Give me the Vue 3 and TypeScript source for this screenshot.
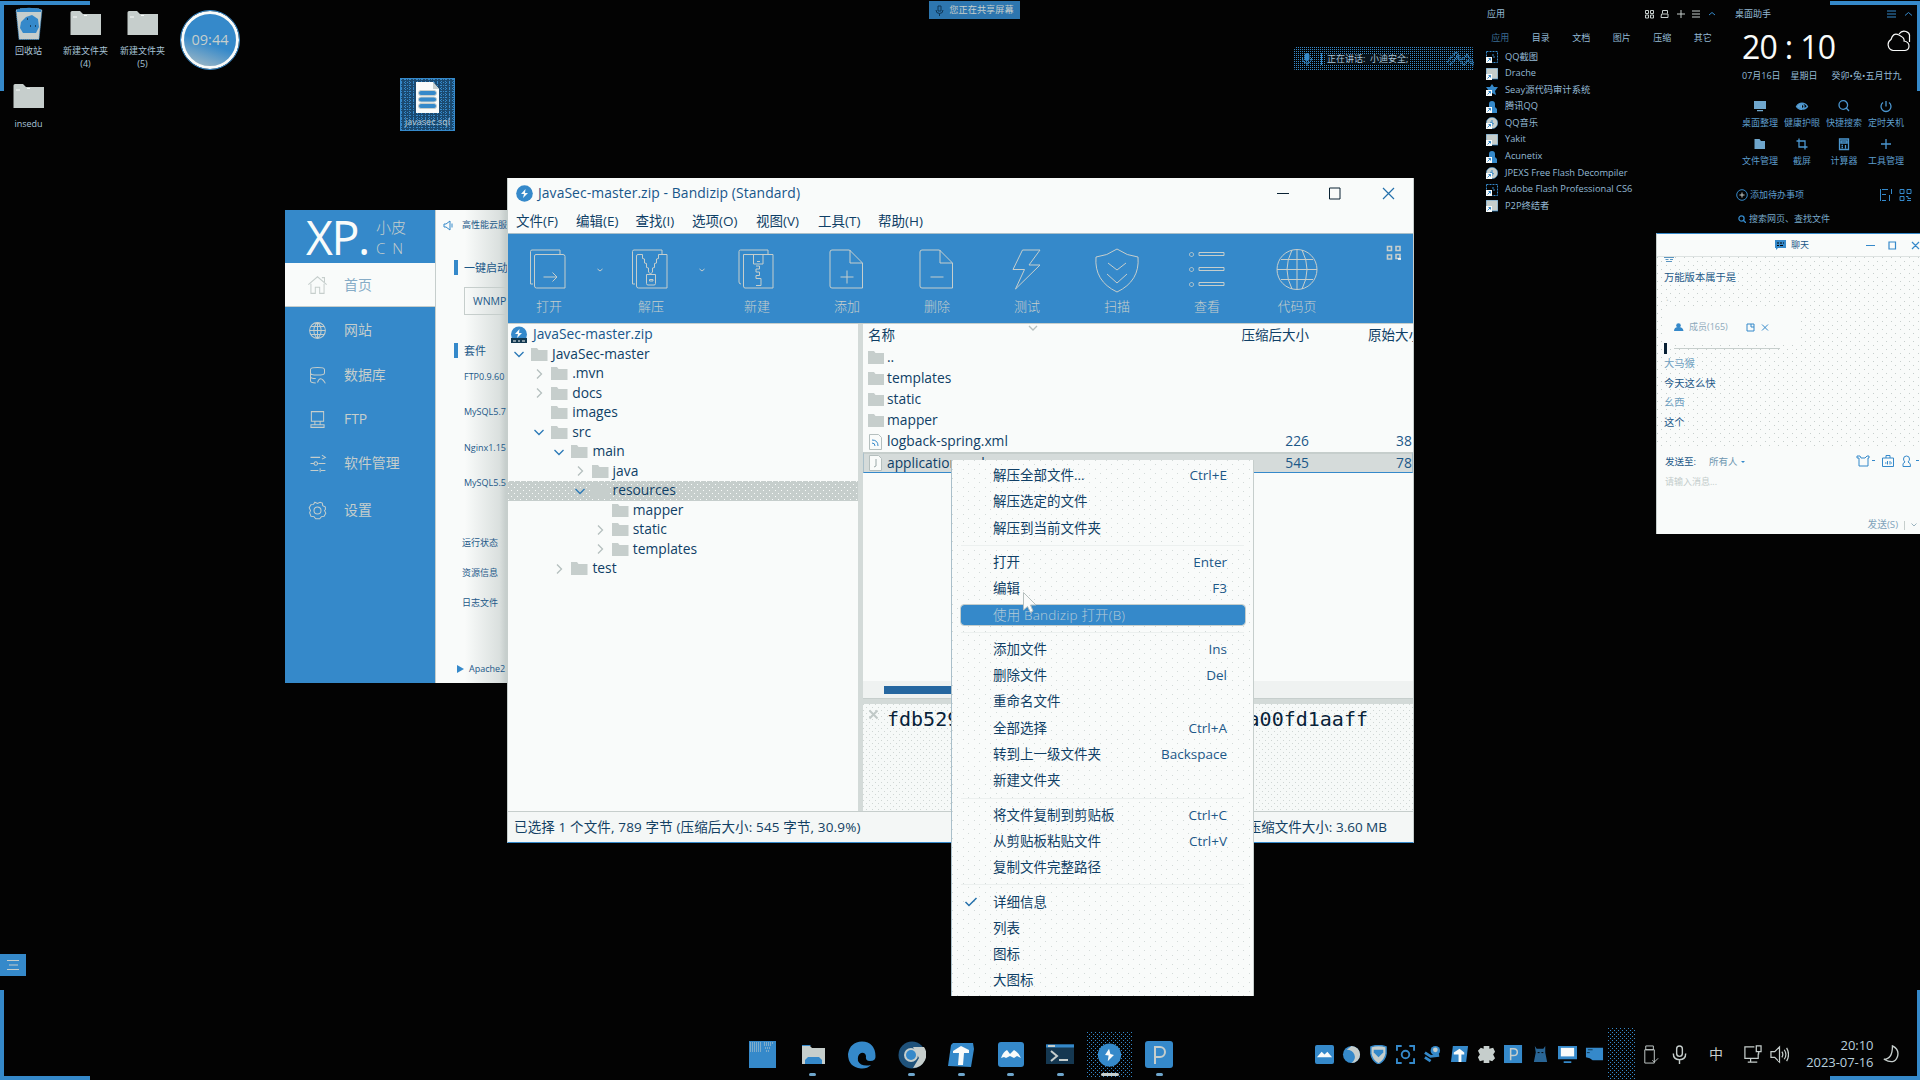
<script setup lang="ts">
interface Glyph { s?: string; f?: string; w?: string }

const desktopIcons = [
  { x: 0, y: 4, kind: 'bin', name: '回收站', sub: '' },
  { x: 57, y: 4, kind: 'folder', name: '新建文件夹', sub: '(4)' },
  { x: 114, y: 4, kind: 'folder', name: '新建文件夹', sub: '(5)' },
  { x: 0, y: 77, kind: 'folder', name: 'insedu', sub: '' },
]

const apps = [
  { name: 'QQ截图', look: 'frame' },
  { name: 'Drache', look: 'card' },
  { name: 'Seay源代码审计系统', look: 'star' },
  { name: '腾讯QQ', look: 'person' },
  { name: 'QQ音乐', look: 'disc' },
  { name: 'Yakit', look: 'card' },
  { name: 'Acunetix', look: 'person' },
  { name: 'JPEXS Free Flash Decompiler', look: 'disc' },
  { name: 'Adobe Flash Professional CS6', look: 'frame' },
  { name: 'P2P终结者', look: 'card' },
]
const appTabs = ['应用', '目录', '文档', '图片', '压缩', '其它']

const tools: { name: string; icon: Glyph }[] = [
  { name: '桌面整理', icon: { f: 'M2 3h12v8H2zM5 12h6v1.200H5z' } },
  { name: '健康护眼', icon: { s: 'M2.500 8.500C5 4 11 4 13.500 8.500C11 12 5 12 2.500 8.500zM6 8.500a2 2 0 1 0 4 0a2 2 0 1 0-4 0z', f: 'M2.500 8.500C4 5.500 7 5 8 5v7C6 12 4 11 2.500 8.500z' } },
  { name: '快捷搜索', icon: { s: 'M3 7a4.300 4.300 0 1 0 8.600 0a4.300 4.300 0 1 0-8.600 0zM10.500 10.300L13 13' } },
  { name: '定时关机', icon: { s: 'M8 3v5.500M5 4.500a5 5 0 1 0 6 0' } },
  { name: '文件管理', icon: { f: 'M2.500 3h5l1.500 2h4v8H2.500z' } },
  { name: '截屏', icon: { s: 'M5 2.500V11h8.500M2.500 5H11v8.500' } },
  { name: '计算器', icon: { s: 'M3.500 3h9v10.500h-9zM5 5h6v2H5zM5.500 9.500h1.500M5.500 11.500h1.500M9.500 9v3.500' } },
  { name: '工具管理', icon: { s: 'M8 3v10M3 8h10' } },
]

const phpNav: { name: string; h: number; icon: string }[] = [
  { name: '首页', h: 44, icon: 'M1.500 11L12 2l10.500 9M4.500 10v11h5v-7h5v7h5V10M17 3h3v5' },
  { name: '网站', h: 45, icon: 'M3 12a9 9 0 1 0 18 0a9 9 0 1 0-18 0zM3 12h18M12 3v18M4.500 7.500h15M4.500 16.500h15M12 3C6.500 7.500 6.500 16.500 12 21M12 3c5.500 4.500 5.500 13.500 0 18' },
  { name: '数据库', h: 44, icon: 'M4 5c0-3 16-3 16 0v4c0 2-3 2.500-8 2.500S4 11 4 9zM4 9v9c0 2 3 2.500 6 2.500M4 13c0 2 3 2.500 6 2.500M12 20c2-6 5-6 9 1' },
  { name: 'FTP', h: 44, icon: 'M5 3h14v11H5zM9 14v4M15 14v4M4.500 18h15v3h-15z' },
  { name: '软件管理', h: 45, icon: 'M4 5h11M17 2.500L21 5l-4 2M4 12h4M10 10a2 2 0 1 0 .1 0zM13 12h8M4 20h9M15 17.500v4.500M16 20h5' },
  { name: '设置', h: 48, icon: 'M9 2.500L12 4l3-1.500 2.500 1L18 6.500l3 1.500v3L20 12l1.500 3-2 3.500-3 .500-2 2.500H10l-2-2.500-3.500-.5-1.500-4L4 12 2.500 9l2-3.500L7.500 5zM8 12a4 4 0 1 0 8 0a4 4 0 1 0-8 0z' },
]
const suites = ['FTP0.9.60', 'MySQL5.7', 'Nginx1.15', 'MySQL5.5']
const states = ['运行状态', '资源信息', '日志文件']

const menus = [
  { t: '文件(F)', w: 60 }, { t: '编辑(E)', w: 59.5 }, { t: '查找(I)', w: 56.5 }, { t: '选项(O)', w: 64 },
  { t: '视图(V)', w: 62 }, { t: '工具(T)', w: 60 }, { t: '帮助(H)', w: 60 },
]

const toolbar: { name: string; w: number; drop?: boolean; icon: string }[] = [
  { name: '打开', w: 102, drop: true, icon: 'M5 36H2.500V3.500q0-1.500 1.500-1.500H32v4M6.500 8q0-1.500 1.500-1.500H35q2 0 2 2V40H8.500q-2 0-2-2zM15.500 29h13M24.500 24.500L29 29l-4.500 4.500' },
  { name: '解压', w: 106, drop: true, icon: 'M5 36H2.500V3.500q0-1.500 1.500-1.500H32v4M12.500 6.500H8q-1.500 0-1.500 1.500v30q0 2 2 2H37V6.500H28.500M12.500 6.500v4l2 .500v4l2 .500v4l2 .500v4l2 2M28.500 6.500v4l-2 .500v4l-2 .500v4l-2 .500v4l-2 2M16.500 26.500h9v9q0 1.500-1.500 1.500h-6q-1.500 0-1.500-1.500zM19.500 33h3.500v-1.500h-3.500z' },
  { name: '新建', w: 90, icon: 'M5 36q-2 0-2-2V3.500q0-1.500 1.500-1.500H32v4M7.500 6.500H37V40H9q-1.500 0-1.500-2zM17.500 6.500v9.500h9.500V6.500M21 13.500h3M20 18h3.500v3H20v3h3.500v3.500H20v3h5v7h-5' },
  { name: '添加', w: 90, icon: 'M6 2h17.500l13 13V40H6q-2 0-2-2V4q0-2 2-2zM24 2v13h12M14.500 29h13M21 22.500v13' },
  { name: '删除', w: 90, icon: 'M6 2h17.500l13 13V40H6q-2 0-2-2V4q0-2 2-2zM24 2v13h12M14.500 29h13' },
  { name: '测试', w: 90, icon: 'M16.500 2h17.500L23 17H34L9.500 41l9-19.500H7z' },
  { name: '扫描', w: 90, icon: 'M21 1q10 7 21 8q2 24-21 35Q-2 33 0 9q11-1 21-8zM12 15l9 7 9-7M11 26l10 9 10-9' },
  { name: '查看', w: 90, icon: 'M5.500 4.500a2 2 0 1 0 .1 0M13 4.500h25v3H13zM5.500 19.500a2 2 0 1 0 .1 0M13 19.500h25v3H13zM5.500 34.500a2 2 0 1 0 .1 0M13 34.500h25v3H13z' },
  { name: '代码页', w: 90, icon: 'M1 21.500a20 20 0 1 0 40 0a20 20 0 1 0-40 0zM1 21.500h40M21 1.500v40M5 11.500h32M5 31.500h32M16 2q-10 19.500 0 39M26 2q10 19.500 0 39' },
]

const tree = [
  { name: 'JavaSec-master', d: 0, m: 'open' },
  { name: '.mvn', d: 1, m: 'shut' },
  { name: 'docs', d: 1, m: 'shut' },
  { name: 'images', d: 1, m: '' },
  { name: 'src', d: 1, m: 'open' },
  { name: 'main', d: 2, m: 'open' },
  { name: 'java', d: 3, m: 'shut' },
  { name: 'resources', d: 3, m: 'open' },
  { name: 'mapper', d: 4, m: '' },
  { name: 'static', d: 4, m: 'shut' },
  { name: 'templates', d: 4, m: 'shut' },
  { name: 'test', d: 2, m: 'shut' },
]

const files = [
  { name: '..', kind: 'folder', packed: '', size: '' },
  { name: 'templates', kind: 'folder', packed: '', size: '' },
  { name: 'static', kind: 'folder', packed: '', size: '' },
  { name: 'mapper', kind: 'folder', packed: '', size: '' },
  { name: 'logback-spring.xml', kind: 'file', packed: '226', size: '38' },
  { name: 'application.yml', kind: 'file', packed: '545', size: '78' },
]

const context: { t?: string; k?: string; on?: boolean; hot?: boolean }[] = [
  { t: '解压全部文件...', k: 'Ctrl+E' }, { t: '解压选定的文件' }, { t: '解压到当前文件夹' }, {},
  { t: '打开', k: 'Enter' }, { t: '编辑', k: 'F3' }, { t: '使用 Bandizip 打开(B)', hot: true }, {},
  { t: '添加文件', k: 'Ins' }, { t: '删除文件', k: 'Del' }, { t: '重命名文件' }, { t: '全部选择', k: 'Ctrl+A' },
  { t: '转到上一级文件夹', k: 'Backspace' }, { t: '新建文件夹' }, {},
  { t: '将文件复制到剪贴板', k: 'Ctrl+C' }, { t: '从剪贴板粘贴文件', k: 'Ctrl+V' }, { t: '复制文件完整路径' }, {},
  { t: '详细信息', on: true }, { t: '列表' }, { t: '图标' }, { t: '大图标' },
]

const chat = [
  { t: '大马猴', dim: true }, { t: '今天这么快', dim: false }, { t: '幺西', dim: true }, { t: '这个', dim: false },
]
</script>

<template>
  <main class="desk">
    <i class="edge tl" /><i class="edge tr" /><i class="edge bl" /><i class="edge br" />

    <div v-for="(d, i) in desktopIcons" :key="i" class="shortcut" :style="{ left: d.x + 'px', top: d.y + 'px' }">
      <svg v-if="d.kind === 'folder'" width="32" height="36" viewBox="0 0 32 36">
        <path d="M.5 8.500q0-1.500 1.500-1.500H10l3 3H31v21H.500z" fill="#c6cecc" /><path d="M3 13h4M14 11.500h3" stroke="#f9fbfa" />
      </svg>
      <svg v-else width="32" height="36" viewBox="0 0 32 36">
        <path d="M3 6L8 4.500H25L29 6 26 35.500H6z" fill="#c6cecc" stroke="#3589ca" stroke-dasharray="1 1" />
        <path d="M4 5.500Q16 2 28 5.500V8H4z" fill="#3589ca" /><path d="M8 18l5-5 6-2 6 4 1 8-3 6H10l-3-5z" fill="#3589ca" />
        <path d="M14 15h1M17 22h1M22 22h1" stroke="#030303" />
      </svg>
      <span>{{ d.name }}</span><span v-if="d.sub">{{ d.sub }}</span>
    </div>

    <div class="orb"><span>09:44</span></div>

    <div class="sqlfile">
      <svg width="24" height="32" viewBox="0 0 24 32">
        <path d="M0 0h17l6 7v24H0z" fill="#f9fbfa" /><path d="M17 0l6 7h-6z" fill="#c6cecc" />
        <g fill="#3589ca" stroke="#c6cecc"><rect x="2.500" y="8.500" width="18" height="5" rx="2.500" /><rect x="2.500" y="15" width="18" height="5" rx="2.500" /><rect x="2.500" y="21.500" width="18" height="5" rx="2.500" /></g>
      </svg>
      <span>javasec.sql</span>
    </div>

    <div class="share"><svg width="9" height="11" viewBox="0 0 9 11"><path d="M3 1h3v5H3zM1 5q0 3.500 3.500 3.500T8 5M4.500 8.500V11" fill="none" stroke="#0e3656" /></svg>您正在共享屏幕</div>

    <div class="speaker">
      <svg width="12" height="14" viewBox="0 0 12 14"><rect x="3.500" y="1" width="5" height="8" rx="2.500" fill="#3589ca" /><path d="M1.500 6q0 5 4.500 5t4.500-5M6 11v3" fill="none" stroke="#3589ca" /></svg>
      <b /><span>正在讲话:&nbsp; 小迪安全;</span>
      <svg class="wave" width="27" height="16" viewBox="0 0 27 16"><path d="M0 11L9 1l6 8 5-5 7 8M3 14L10 6l7 8 4-5 6 6" fill="none" stroke="#3589ca" stroke-dasharray="1 1" stroke-width="2" /></svg>
    </div>

    <section class="apps">
      <header><span>应用</span>
        <svg width="72" height="10" viewBox="0 0 72 10" fill="none" stroke="#c6cecc"><path d="M.5 1.500h3v3h-3zM5.500 1.500h3v3h-3zM.5 6h3v3h-3zM5.500 6h3v3h-3zM17.500 4.500V1.500h5v3M16.500 5h6.500v3.500h-7zM36 1v8M32 5h8M47 2h8M47 5h8M47 8h8" /><path d="M64 6l3-2.500L70 6" stroke="#3589ca" /></svg>
      </header>
      <nav><span v-for="(t, i) in appTabs" :key="t" :class="{ faint: i === 0 }">{{ t }}</span></nav>
      <ul>
        <li v-for="a in apps" :key="a.name">
          <svg width="12" height="12" viewBox="0 0 12 12">
            <path v-if="a.look === 'frame'" d="M.5.500h11v11H.500zM6 4h2v3" fill="none" stroke="#3589ca" stroke-dasharray="2 1" />
            <rect v-else-if="a.look === 'card'" x="0" y="0" width="12" height="11" fill="#c6cecc" stroke="#3589ca" stroke-width=".7" />
            <path v-else-if="a.look === 'star'" d="M0 3h4l2-3 2 3h4L9 7l1 4-4-2-4 2 1-4z" fill="#3589ca" />
            <circle v-else-if="a.look === 'disc'" cx="6" cy="6" r="5.800" fill="#c6cecc" stroke="#3589ca" stroke-width=".5" />
            <path v-else d="M3 3a3 3 0 0 1 6 0v3l2 2v4H3z" fill="#3589ca" />
            <path v-if="a.look === 'disc'" d="M6 3v6M4 5l4 2" stroke="#3589ca" />
            <rect y="6" width="6" height="6" fill="#f9fbfa" /><path d="M1.500 10.500l3-3M2.500 7.500h2v2" fill="none" stroke="#3589ca" />
          </svg>{{ a.name }}
        </li>
      </ul>
    </section>

    <section class="helper">
      <header><span>桌面助手</span>
        <svg width="26" height="10" viewBox="0 0 26 10" fill="none" stroke="#3589ca"><path d="M1 2h9M1 5h9M1 8h9M19 6.500l3.500-3L26 6.500" /></svg>
      </header>
      <div class="now"><span>20 : 10</span>
        <svg width="24" height="22" viewBox="0 0 24 22" fill="none" stroke="#f9fbfa" stroke-width="1.200"><path d="M6 20.500a6 6 0 0 1-2-11Q6 2 12 5t5 6q5 1 5 5t-4 4.500zM12 4q3-4 7-2.500T22.500 6v6" /></svg>
      </div>
      <div class="date"><span>07月16日</span><span>星期日</span><span>癸卯•兔•五月廿九</span></div>
      <div class="tools">
        <div v-for="t in tools" :key="t.name">
          <svg width="16" height="16" viewBox="0 0 16 16"><path v-if="t.icon.f" :d="t.icon.f" fill="#6fa6cc" /><path v-if="t.icon.s" :d="t.icon.s" fill="none" stroke="#4b96cf" stroke-width="1.300" /></svg>
          <span>{{ t.name }}</span>
        </div>
      </div>
      <div class="todo">
        <svg width="12" height="12" viewBox="0 0 12 12" fill="none" stroke="#c6cecc"><circle cx="6" cy="6" r="5.300" stroke="#3589ca" /><path d="M6 3.500v5M3.500 6h5" /></svg>
        <span>添加待办事项</span>
        <svg width="32" height="12" viewBox="0 0 32 12" fill="none" stroke="#3589ca"><path d="M.5 0v12M2 .500h6M2 5.500h4M2 11.500h4M9.500 6v6M11.500 0v5M20 .500h4v4h-4zM27 .500h4v4h-4zM20 7.500h4v4h-4zM26 7.500h2v2h3M27 11.500h4" /></svg>
      </div>
      <div class="find">
        <svg width="8" height="8" viewBox="0 0 8 8" fill="none" stroke="#3589ca" stroke-width="1.300"><circle cx="3.500" cy="3.500" r="2.600" /><path d="M5.500 5.500L8 8" /></svg>
        <span>搜索网页、查找文件</span>
      </div>
    </section>

    <section class="chat">
      <header>
        <svg width="11" height="10" viewBox="0 0 11 10"><path d="M0 0h11v8H3L1 10V8H0z" fill="#3589ca" /><path d="M2 3h2M5 3h2M8 3h1M2 5.500h2M5 5.500h3" stroke="#030303" /></svg>
        <span>聊天</span>
        <svg class="wc" width="54" height="9" viewBox="0 0 54 9" fill="none" stroke="#3589ca" stroke-width="1.200"><path d="M0 4.500h9M23 1h6.500v7H23zM46 1l7 7M53 1l-7 7" /></svg>
      </header>
      <div class="log">
        <svg class="cut" width="10" height="5" viewBox="0 0 10 5"><path d="M0 .500h10M1.500 2.500h3M6 2.500h3M2 4.500h6" stroke="#5b95c0" stroke-width="1" /></svg>
        <p class="big">万能版本属于是</p>
        <p class="dot">.</p>
        <div class="members">
          <svg width="10" height="9" viewBox="0 0 10 9" fill="#3589ca"><circle cx="4.500" cy="2.500" r="2.300" /><path d="M0 8q0-4 4.500-4t5 4z" /></svg>
          <span>成员(165)</span>
          <svg width="23" height="9" viewBox="0 0 23 9" fill="none" stroke="#3589ca"><path d="M5 1H1v7h7V4M5 4V1h3v3zM16 1.500l6 6M22 1.500l-6 6" /></svg>
        </div>
        <div class="rule"><b /><i /></div>
        <p v-for="c in chat" :key="c.t" :class="{ dim: c.dim }">{{ c.t }}</p>
      </div>
      <div class="to"><span>发送至:</span><em>所有人</em><u />
        <svg width="64" height="13" viewBox="0 0 64 13" fill="none" stroke="#3589ca"><path d="M1 1h3l1 2h4l2-2h2v2h-1v8H3V3H1zM16 5.500h3M26.500 3h11v8.500h-11zM30 3V.500h4V3M29 8h1.500M31.500 6v3.500M34 6v3.500M36 8h-1M47.500 4a3 3 0 1 1 6 0q0 1.500-1.500 3 3 1 2.500 4.500H47Q46 8 49 7q-1.500-1.500-1.500-3zM60 5.500h3" /></svg>
      </div>
      <div class="hint">请输入消息...</div>
      <footer><span>发送(S)</span><i /><svg width="6" height="4" viewBox="0 0 6 4"><path d="M.5.500L3 3 5.500.500" fill="none" stroke="#9ab3bf" /></svg></footer>
    </section>

    <section class="php">
      <aside>
        <div class="logo"><strong>XP.</strong><span>小皮<br>C N</span></div>
        <a v-for="(n, i) in phpNav" :key="n.name" :class="{ cur: i === 0 }" :style="{ height: n.h + 'px' }">
          <svg width="21" height="21" viewBox="0 0 24 24"><path :d="n.icon" fill="none" stroke="#c6cecc" stroke-width="1.150" /></svg>{{ n.name }}
        </a>
      </aside>
      <div class="pane">
        <div class="ad"><svg width="11" height="11" viewBox="0 0 11 11" fill="none" stroke="#3589ca"><path d="M1 4h2l4-3v9L3 7H1zM9 3.500v4" /></svg>高性能云服务</div>
        <h4 class="one">一键启动</h4>
        <div class="wnmp">WNMP</div>
        <h4 class="two">套件</h4>
        <p v-for="s in suites" :key="s" class="suite">{{ s }}</p>
        <div class="states"><p v-for="s in states" :key="s">{{ s }}</p></div>
        <div class="apache"><i />Apache2</div>
      </div>
    </section>

    <section class="zip">
      <header>
        <svg width="17" height="17" viewBox="0 0 17 17"><circle cx="8.500" cy="8.500" r="8.300" fill="#3589ca" /><path d="M9.500 4L5 9h3l-1 4 5-5H9z" fill="#f9fbfa" /></svg>
        <span>JavaSec-master.zip - Bandizip (Standard)</span>
        <svg class="wc" width="118" height="13" viewBox="0 0 118 13" fill="none"><path d="M0 6.500h12M52.500 1h10.500v11H52.500z" stroke="#0a2233" /><path d="M106 1l11 11M117 1l-11 11" stroke="#2470ab" stroke-width="1.200" /></svg>
      </header>
      <nav><span v-for="m in menus" :key="m.t" :style="{ width: m.w + 'px' }">{{ m.t }}</span></nav>
      <div class="bar">
        <div v-for="t in toolbar" :key="t.name" class="act" :style="{ width: t.w + 'px' }">
          <div class="pic">
            <svg width="44" height="46" viewBox="-1 -1 44 46"><path :d="t.icon" fill="none" stroke="#c6cecc" /></svg>
            <span>{{ t.name }}</span>
          </div>
          <svg v-if="t.drop" class="drop" width="6" height="4" viewBox="0 0 6 4"><path d="M.5 1L3 3 5.500 1" fill="none" stroke="#c6cecc" /></svg>
        </div>
        <svg class="qr" width="16" height="16" viewBox="0 0 16 16" fill="none" stroke="#c6cecc" stroke-width="1.600"><path d="M1.500 1.500h4v4h-4zM10 1.500h4v4h-4zM1.500 10h4v4h-4zM10 9.500h4v4h-4z" /><path d="M12 14h3" stroke="#f9fbfa" /></svg>
      </div>
      <div class="body">
        <div class="tree">
          <div class="root">
            <svg width="18" height="18" viewBox="0 0 18 18"><circle cx="9" cy="8.500" r="8" fill="#3589ca" /><path d="M9.500 3L5 8h3l-1 4 5-5H9z" fill="#f9fbfa" /><path d="M1 12h16v5H1z" fill="#123850" /><path d="M3 15h3M8 15h2M12 15h3" stroke="#f9fbfa" /></svg>
            JavaSec-master.zip
          </div>
          <div v-for="(n, i) in tree" :key="i" class="node" :class="{ sel: n.name === 'resources' }" :style="{ paddingLeft: 5 + n.d * 20.2 + 'px' }">
            <svg width="12" height="12" viewBox="0 0 12 12"><path v-if="n.m === 'open'" d="M1.500 4L6 8.500 10.500 4" fill="none" stroke="#2a78b6" stroke-width="1.300" /><path v-if="n.m === 'shut'" d="M4 1.500L8.500 6 4 10.500" fill="none" stroke="#b5bfbe" stroke-width="1.300" /></svg>
            <svg class="fold" width="17" height="13" viewBox="0 0 17 13"><path d="M0 0h6l1.500 2H16.500v11H0z" fill="#c6cecc" /></svg>
            {{ n.name }}
          </div>
        </div>
        <div class="split" />
        <div class="right">
          <div class="cols"><span class="c1">名称</span><svg width="10" height="6" viewBox="0 0 10 6"><path d="M1 1l4 4 4-4" fill="none" stroke="#b5bfbe" stroke-width="1.300" /></svg><span class="c2">压缩后大小</span><span class="c3">原始大小</span></div>
          <div v-for="f in files" :key="f.name" class="row" :class="{ sel: f.name === 'application.yml' }">
            <svg width="17" height="16" viewBox="0 0 17 16"><path v-if="f.kind === 'folder'" d="M0 1h6l1.500 2H16v11H0z" fill="#c6cecc" /><g v-else><path d="M1.500.500h9l3 3v12h-12z" fill="#f9fbfa" stroke="#b5bfbe" /><path v-if="f.packed === '226'" d="M4 6q6 0 6 6M4 9q3 0 3 3" fill="none" stroke="#3589ca" /><path v-else d="M8 4v7l-2 1" fill="none" stroke="#9aa8a8" /></g></svg>
            <span class="c1">{{ f.name }}</span><span class="c2">{{ f.packed }}</span><span class="c3">{{ f.size }}</span>
          </div>
          <div class="void" />
          <div class="scroll"><i /></div>
          <div class="hsplit" />
          <div class="note"><svg width="11" height="11" viewBox="0 0 11 11"><path d="M1.500 1.500l8 8M9.500 1.500l-8 8" stroke="#c0c9c7" stroke-width="2" /></svg><span>fdb529</span><span class="tail">a00fd1aaff</span></div>
        </div>
      </div>
      <footer><span class="picked">已选择 1 个文件, 789 字节 (压缩后大小: 545 字节, 30.9%)</span><span>压缩文件大小: 3.60 MB</span></footer>
    </section>

    <section class="ctx">
      <template v-for="(c, i) in context" :key="i">
        <div v-if="c.t" class="item" :class="{ hot: c.hot }">
          <svg width="14" height="12" viewBox="0 0 14 12"><path v-if="c.on" d="M1.500 6L5 9.500 12.500 2" fill="none" stroke="#2470ab" stroke-width="1.500" /></svg>
          <span>{{ c.t }}</span><kbd>{{ c.k }}</kbd>
        </div>
        <hr v-else>
      </template>
    </section>
    <svg class="mouse" width="14" height="21" viewBox="0 0 14 21"><path d="M.5.500v17.500l4-3.500 3 6 2.500-1.500-2.500-6h5.500z" fill="#f9fbfa" stroke="#b5bfbe" /></svg>

    <div class="tab"><svg width="14" height="12" viewBox="0 0 14 12"><path d="M1 1.500h12M3 6h9M1 10.500h12" stroke="#c6cecc" stroke-width="1.200" /></svg></div>

    <div class="dock">
      <div><svg viewBox="0 0 28 28"><rect width="27" height="27" fill="#3589ca" /><path d="M1 2h11M1 4h11M1 6h11M1 8h11M1 10h11M15 2h10M15 4h8M16 7h5M17 10h3" stroke="#c6cecc" stroke-dasharray="1 1" /></svg></div>
      <div class="run"><svg viewBox="0 0 28 28"><path d="M3 5h8l2 2h13v16H3z" fill="#c6cecc" /><path d="M6 23v-4l3-3h11l3 3v4z" fill="#3589ca" /><path d="M3 4h8l1 1H3z" fill="#3589ca" /></svg></div>
      <div><svg viewBox="0 0 28 28"><path d="M27.500 15Q28 20 22 20Q17 20 18 15Q17 11 13 12Q9 14 10 20Q13 26 23 24Q19 28 13 27.500Q0 26 0 13Q2 1 14 .500Q27 1 27.500 15z" fill="#3589ca" /></svg></div>
      <div class="run"><svg viewBox="0 0 28 28"><circle cx="14" cy="14" r="13.500" fill="#1f527b" /><path d="M15 6H26A13.500 13.500 0 0 1 15 27L21 17z" fill="#c6cecc" /><circle cx="13" cy="14" r="7" fill="#c6cecc" /><circle cx="13" cy="14" r="5" fill="#3589ca" /></svg></div>
      <div class="run"><svg viewBox="0 0 28 28"><path d="M6 2L26 2 27 8 24 26 1 25 4 4z" fill="#3589ca" /><path d="M6 10L14 5l8 4v3h-5l-1 12h-5l1-12H6z" fill="#f9fbfa" /></svg></div>
      <div class="run"><svg viewBox="0 0 28 28"><rect x="1" y="1" width="26" height="25" rx="3" fill="#3589ca" /><path d="M4 17q2-6 6-8l3 4 4-4q5 3 7 8l-4-2-3 2-4-2-4 2-2-1z" fill="#f9fbfa" /></svg></div>
      <div class="run"><svg viewBox="0 0 28 28"><rect y="3" width="28" height="20" fill="#153851" /><path d="M0 5h28" stroke="#3589ca" stroke-width="3" /><path d="M2 5h7" stroke="#c6cecc" stroke-width="2" /><path d="M5 10l6 5-6 5M13 19h9" fill="none" stroke="#c6cecc" stroke-width="2" /></svg></div>
      <div class="run active"><svg viewBox="0 0 28 28"><circle cx="14" cy="14" r="13" fill="#3589ca" /><path d="M13.500 7L9 14l4 .500-1 6.500 7-7-4-1z" fill="#f9fbfa" /></svg></div>
      <div class="run"><svg viewBox="0 0 28 28"><rect width="28" height="27" rx="3" fill="#3589ca" /><path d="M10 23V6h5a5 5 0 0 1 0 10h-5" fill="none" stroke="#c6cecc" stroke-width="2" /></svg></div>
    </div>

    <div class="tray">
      <div><svg viewBox="0 0 20 20"><rect width="20" height="20" rx="2" fill="#3589ca" /><path d="M2 13l5-6 3 3 3-3 5 6z" fill="#f9fbfa" /></svg></div>
      <div><svg viewBox="0 0 20 20"><circle cx="10" cy="10" r="9" fill="#3589ca" /><path d="M10 1a9 9 0 0 1 0 18q5-4 3-9T5 5z" fill="#c6cecc" /></svg></div>
      <div><svg viewBox="0 0 20 20"><path d="M2 2q8-3 16 0v7q-1 7-8 11Q3 16 2 9z" fill="#c6cecc" stroke="#3589ca" stroke-width="1.500" /><path d="M5 8l5 5 5-5V5H5z" fill="#3589ca" /></svg></div>
      <div><svg viewBox="0 0 20 20" fill="none" stroke="#3589ca" stroke-width="2"><circle cx="10" cy="10" r="4" /><path d="M1 6V1h5M14 1h5v5M19 14v5h-5M6 19H1v-5" /></svg></div>
      <div><svg viewBox="0 0 20 20"><circle cx="13" cy="6" r="5" fill="#3589ca" /><circle cx="13" cy="5" r="2.500" fill="#c6cecc" /><path d="M2 8l6 4 9-1M2 13l6 4" fill="none" stroke="#3589ca" stroke-width="3" /></svg></div>
      <div><svg viewBox="0 0 20 20"><path d="M3 1h16l-2 17H1z" fill="#3589ca" /><path d="M4 8l6-4 5 4v2h-3v8H9v-8H4z" fill="#f9fbfa" /></svg></div>
      <div><svg viewBox="0 0 20 20"><path d="M7 1h6v3l4-1 2 4-2 3 2 4-3 3-3-1v3H7v-3l-4 1-2-4 2-3-2-4 3-3 3 1z" fill="#c6cecc" /></svg></div>
      <div><svg viewBox="0 0 20 20"><rect y="0" width="19" height="19" fill="#3589ca" /><path d="M7 16V4h3q4 0 4 3.500T10 11H7" fill="none" stroke="#c6cecc" stroke-width="1.600" /></svg></div>
      <div><svg viewBox="0 0 20 20"><path d="M4 1l2 3h7l2-3v7l2 10H3L5 8z" fill="#2a6696" /><path d="M7 8h2M11 8h2" stroke="#030303" /></svg></div>
      <div><svg viewBox="0 0 20 20"><path d="M0 1h20v14H0zM6 17h8v2H6z" fill="#3589ca" /><path d="M3 3h14v9H3z" fill="#f9fbfa" /></svg></div>
      <div><svg viewBox="0 0 20 20"><path d="M1 3h18v13H8l-3-2-4-1z" fill="#3589ca" /><path d="M3 5h5M2 8h3" stroke="#123850" /></svg></div>
      <div class="ghost" />
      <div style="width:31px"><svg viewBox="0 0 20 20" fill="none" stroke="#c6cecc"><path d="M5 1h8v4H5zM4 5h10v14H4zM12 16l2 2 4-4" /></svg></div>
      <div style="width:28px"><svg viewBox="0 0 20 20" fill="none" stroke="#c6cecc" stroke-width="1.500"><rect x="7" y="1" width="6" height="11" rx="3" /><path d="M3.500 9q0 6.500 6.500 6.500T16.500 9M10 15.500V20" /></svg></div>
      <div style="width:45px" class="ime">中</div>
      <div style="width:27px"><svg viewBox="0 0 20 20" fill="none" stroke="#c6cecc" stroke-width="1.300"><path d="M12 2H2v12h14V9M8 14v4M5 18h10M14 1h5v6h-5zM16.500 7v3" /></svg></div>
      <div style="width:28px"><svg viewBox="0 0 20 20" fill="none" stroke="#c6cecc" stroke-width="1.300"><path d="M1 7h4l5-5v16l-5-5H1zM12.500 7q2 3 0 6M15 5q3.500 5 0 10M17.500 3q4 7 0 14" /></svg></div>
      <div class="when"><span>20:10</span><span>2023-07-16</span></div>
      <div style="width:38px"><svg viewBox="0 0 20 20" fill="none" stroke="#c6cecc" stroke-width="1.400"><path d="M11 1q8 4 5 12T2 15q9 0 9-14z" /></svg></div>
    </div>
  </main>
</template>

<style>
body { background: #030303; overflow: hidden; }
</style>

<style scoped>
* { box-sizing: border-box; }
.desk {
  --b: #3589ca; --g: #c6cecc; --w: #f9fbfa; --k: #030303; --ink: #0f3f66;
  position: relative; width: 1920px; height: 1080px; overflow: hidden; background: var(--k); color: var(--ink);
  font: 13.5px/1.2 "Open Sans", "Noto Sans CJK SC", sans-serif; white-space: nowrap;
}
svg { display: block; flex: none; }
p, h4, ul { margin: 0; padding: 0; font-weight: normal; list-style: none; }
.edge { position: absolute; width: 90px; height: 90px; border: 0 solid var(--b); }
.tl { left: 0; top: 1px; border-width: 4px 0 0 4px; }
.tr { right: 0; top: 1px; border-width: 4px 3px 0 0; }
.bl { left: 0; bottom: 0; border-width: 0 0 4px 4px; }
.br { right: 0; bottom: 0; border-width: 0 3px 4px 0; }

.shortcut { position: absolute; width: 57px; display: flex; flex-direction: column; align-items: center; color: #a9c5d8; font-size: 9px; line-height: 13px; }
.shortcut svg { margin-bottom: 4px; }
.orb { position: absolute; left: 181px; top: 11px; width: 58px; height: 58px; border-radius: 50%; border: 3px solid var(--w); outline: 1px solid var(--b);
  background: linear-gradient(20deg, #8db0c6 12%, var(--b) 45%); display: flex; align-items: center; justify-content: center; color: var(--g); font-size: 14.500px; }
.sqlfile { position: absolute; left: 400px; top: 78px; width: 55px; height: 53px; border: 1px solid var(--b); display: flex; flex-direction: column; align-items: center; padding-top: 3px; color: #b8c9d3; font-size: 9px; line-height: 15px;
  background-color: #1b4a70; background-image: conic-gradient(from 90deg at 1px 1px, #0000 50%, var(--b) 0 75%, #0000 0), conic-gradient(from 90deg at 1px 1px, #0000 50%, var(--b) 0 75%, #0000 0); background-size: 3px 3px, 4px 2px; }
.share { position: absolute; left: 929px; top: 1px; width: 91px; height: 18px; background: #2d76af; display: flex; align-items: center; justify-content: center; gap: 5px; font-size: 9.200px; color: var(--g); }
.speaker { position: absolute; left: 1294px; top: 47px; width: 180px; height: 24px; border-radius: 3px; padding-left: 7px; display: flex; align-items: center; color: #a9c5d8; font-size: 9px;
  background-image: conic-gradient(from 90deg at 1px 1px, #0000 50%, #3589ca 0 75%, #0000 0); background-size: 2px 2px; }
.speaker b { width: 1px; height: 12px; background: var(--b); margin: 0 4px 0 8px; }
.speaker span { background: #07121b; padding: 0 1px; }
.wave { margin-left: auto; }

.apps { position: absolute; left: 1486px; top: 6px; width: 232px; font-size: 9px; color: #94bad5; }
.apps header { display: flex; justify-content: space-between; align-items: center; height: 16px; padding-left: 1px; }
.apps header svg { margin-right: 1px; }
.apps nav { display: flex; height: 32px; align-items: center; margin-left: -6px; width: 243px; }
.apps nav span { width: 40.500px; text-align: center; }
.faint { color: #3a6c94; }
.apps nav { margin-bottom: -6px; }
.apps li { height: 16.550px; display: flex; align-items: center; gap: 7px; font-size: 9.300px; }
.apps li svg { position: relative; top: 1px; }

.helper { position: absolute; left: 1735px; top: 6px; width: 177px; font-size: 9px; color: #94bad5; }
.helper header { display: flex; align-items: center; justify-content: space-between; height: 16px; }
.now { display: flex; justify-content: space-between; align-items: flex-start; height: 43px; padding: 1px 1px 0 7px; color: var(--w); font-size: 32px; letter-spacing: -.7px; line-height: 47px; }
.now svg { margin-top: 7px; }
.date { display: flex; gap: 10px; padding-left: 7px; height: 22px; align-items: center; }
.date span:last-child { margin-left: 4px; }
.tools { display: grid; grid-template-columns: repeat(4, 42px); margin: 11px 0 0 4px; }
.tools div { height: 37.500px; display: flex; flex-direction: column; align-items: center; line-height: 12px; color: #5d9dcb; }
.tools svg { margin-bottom: 3px; }
.todo { display: flex; align-items: center; height: 24px; margin-top: 10px; padding: 0 1px 0 1px; gap: 2px; color: #5d9dcb; }
.todo svg:last-child { margin-left: auto; margin-right: -1px; }
.find { display: flex; align-items: center; height: 24px; padding-left: 3px; gap: 3px; color: #78a9c9; }

.chat { position: absolute; left: 1656px; top: 233px; width: 264px; height: 301px; background: var(--w); border-top: 1px solid var(--b); border-left: 1px solid var(--g); font-size: 10.300px; color: #1c5888; overflow: hidden; }
.chat header { height: 22px; display: flex; align-items: center; padding-left: 118px; gap: 5px; font-size: 9px; }
.chat .wc { margin-left: auto; margin-right: 0; }
.log { height: 191px; border-top: 1px solid #dde2e1; padding-left: 7px; background-color: var(--w);
  background-image: conic-gradient(from 90deg at 1px 1px, #0000 50%, #c6cecc 0 75%, #0000 0), conic-gradient(from 90deg at 1px 1px, #0000 50%, #c6cecc 0 75%, #0000 0); background-size: 9px 8px; background-position: 0 0, 4px 4px; }
.log p { height: 19.650px; line-height: 19px; }
.log .cut { margin-bottom: 4px; }
.log .big { height: 22px; line-height: 22px; }
.log .dot { height: 20px; color: var(--g); padding-left: 2px; }
.log .dim { color: #6fa0c0; }
.members { display: flex; align-items: center; height: 35px; width: 135px; padding: 3px 0 0 10px; gap: 5px; background: var(--w); font-size: 9px; color: #8da9ba; }
.members svg:last-child { margin-left: auto; margin-right: 30px; }
.rule { display: flex; align-items: center; height: 12px; margin: -5px 0 4px; gap: 7px; position: relative; top: 4px; }
.rule b { width: 3px; height: 11px; background: #082034; }
.rule i { width: 106px; height: 1px; background: var(--g); }
.to { height: 29px; display: flex; align-items: center; padding-left: 8px; font-size: 9.500px; }
.to em { font-style: normal; margin-left: 13px; color: #6d96b0; }
.to u { border: 2.500px solid transparent; border-top-color: var(--b); margin: 2px 0 0 3px; }
.to svg { margin-left: auto; }
.hint { padding-left: 8px; height: 14px; line-height: 12px; font-size: 9px; color: #c3cccb; }
.chat footer { display: flex; align-items: center; justify-content: flex-end; height: 26px; margin-top: 22px; padding-right: 3px; color: #7fa3bb; font-size: 9.700px; }
.chat footer i { width: 1px; height: 9px; background: var(--g); margin: 0 6px; }

.php { position: absolute; left: 285px; top: 210px; width: 223px; height: 473px; display: flex; overflow: hidden; background: var(--w); }
.php aside { width: 150px; background: var(--b); color: var(--g); }
.logo { height: 53px; display: flex; padding-left: 21px; color: var(--w); line-height: 53px; }
.logo strong { font: 400 48px/54px "Open Sans", sans-serif; width: 70px; letter-spacing: -1.500px; transform: scaleX(.97); transform-origin: 0 0; }
.logo span { color: var(--g); font-size: 15px; line-height: 20.500px; padding-top: 7px; word-spacing: 3px; font-weight: 300; }
.php a { display: flex; align-items: center; padding: 2px 0 0 22px; gap: 16px; font-size: 13.900px; }
.php a.cur { background: var(--w); color: #86acc7; border-bottom: 1px solid var(--g); }
.pane { width: 73px; overflow: hidden; color: #1c5888; font-size: 9px; background: linear-gradient(90deg, #c6cecc00 40%, #c6cecc99 88%, #c6cecc 97%), var(--w); border-left: 1px solid var(--g); }
.ad { display: flex; align-items: center; height: 30px; padding-left: 7px; gap: 8px; }
.pane h4 { border-left: 4px solid var(--b); margin: 20px 0 0 18px; padding-left: 6px; font-size: 11px; line-height: 15px; height: 15px; }
.wnmp { margin: 12px 0 28px 28px; padding-left: 8px; height: 28px; line-height: 27px; border: 1px solid var(--g); border-right: 0; font-size: 10.500px; }
.pane h4.two { margin: 0 0 1px 18px; }
.suite { height: 35.300px; line-height: 35px; padding-left: 28px; }
.states { padding: 28px 0 0 26px; }
.states p { height: 30px; line-height: 30px; }
.apache { display: flex; align-items: center; gap: 5px; padding-left: 21px; height: 30px; margin-top: 36px; }
.apache i { border: 4px solid transparent; border-left: 7px solid var(--b); border-right: 0; }

.zip { position: absolute; left: 507px; top: 178px; width: 907px; height: 665px; background: var(--w); border: 1px solid var(--g); border-top: 0; border-bottom-color: var(--b); display: flex; flex-direction: column; overflow: hidden; }
.zip header { height: 31px; display: flex; align-items: center; gap: 5px; padding-left: 8px; font-size: 13.900px; letter-spacing: .08px; color: #17568a; }
.zip header .wc { margin-left: auto; margin-right: 18px; }
.zip > nav { height: 24px; display: flex; align-items: center; padding: 1px 0 0 8px; }
.zip > nav span { flex: none; }
.bar { height: 91px; background: var(--b); border-top: 1px solid #a9bfca; border-bottom: 1px solid var(--g); display: flex; position: relative; color: var(--g); }
.act { flex: none; display: flex; position: relative; left: 1px; }
.pic { width: 80px; display: flex; flex-direction: column; align-items: center; padding-top: 13px; }
.pic svg { margin-bottom: 4px; }
.pic span { font-size: 13px; font-weight: 300; line-height: 18px; }
.drop { margin: 34px 0 0 8px; }
.qr { position: absolute; right: 11px; top: 11px; }
.body { flex: 1; display: flex; min-height: 0; }
.tree { width: 350px; padding-top: 1px; font-size: 13.800px; }
.root, .node { height: 19.500px; display: flex; align-items: center; gap: 5px; }
.root { padding-left: 2px; color: #17568a; }
.fold { margin: 0 -1px 0 1px; }
.node.sel { background-color: var(--g); background-image: conic-gradient(from 90deg at 1px 1px, #0000 50%, #f9fbfa 0 75%, #0000 0), conic-gradient(from 90deg at 1px 1px, #0000 50%, #f9fbfa 0 75%, #0000 0); background-size: 6px 6px; background-position: 0 0, 3px 3px; }
.split { width: 5px; background: #d3dad8; }
.right { flex: 1; min-width: 0; display: flex; flex-direction: column; overflow: hidden; font-size: 13.800px; }
.cols, .row { display: flex; align-items: center; padding-left: 5px; flex: none; }
.cols { height: 23px; font-size: 13.500px; }
.cols .c1 { width: 160px; }
.cols svg { align-self: flex-start; margin-top: 1px; }
.c2 { text-align: right; width: 80px; margin-left: auto; }
.cols .c2 { width: 271px; margin-left: 0; }
.c3 { width: 45px; margin-left: 59px; flex: none; }
.row { height: 21px; gap: 2px; border: 1px solid transparent; }
.row > svg { margin-left: -1px; }
.row .c2, .row .c3 { color: #1c5888; }
.row .c3 { width: 16px; margin-left: 85px; }
.row.sel { background: #d5dbda; border-color: #a9bfca; border-bottom-color: var(--b); border-top: 2px solid var(--g); }
.void { flex: 1; }
.scroll { height: 17px; background: #eff2f1; display: flex; align-items: center; flex: none; }
.scroll i { margin-left: 21px; width: 300px; height: 8px; background: #2667a0; }
.hsplit { height: 6px; background: #d3dad8; flex: none; border-top: 1px solid var(--g); }
.note { height: 107px; flex: none; display: flex; align-items: flex-start; padding: 5px 45px 0 5px; color: #082238; font: 20px/20px "DejaVu Sans Mono", monospace; background-color: #f6f9f8;
  background-image: conic-gradient(from 90deg at 1px 1px, #0000 50%, #cfd6d4 0 75%, #0000 0), conic-gradient(from 90deg at 1px 1px, #0000 50%, #cfd6d4 0 75%, #0000 0); background-size: 6px 6px; background-position: 0 0, 3px 3px; }
.note svg { margin-right: 8px; }
.note .tail { margin-left: auto; }
.zip footer { height: 31px; display: flex; align-items: center; justify-content: space-between; padding: 1px 26px 0 6px; border-top: 1px solid var(--g); background: #f4f7f6; font-size: 13.500px; color: #123f63; }
.picked { letter-spacing: .14px; }

.ctx { position: absolute; left: 951px; top: 460px; width: 303px; height: 536px; padding: 2px 9px 0; display: flex; flex-direction: column; border-left: 1px solid #a9bfca; border-right: 1px solid var(--g); background-color: var(--w);
  background-image: conic-gradient(from 90deg at 1px 1px, #0000 50%, #d3dad8 0 75%, #0000 0), conic-gradient(from 90deg at 1px 1px, #0000 50%, #d3dad8 0 75%, #0000 0); background-size: 11px 9px; background-position: 0 0, 5px 4px; }
.item { height: 26.300px; flex: none; display: flex; align-items: center; padding: 0 17px 0 3px; }
.item svg { margin-right: 15px; }
.item kbd { font: inherit; margin-left: auto; color: #1c5888; }
.item.hot { height: 20px; margin: 3.300px -1px 3px 0; border-radius: 3px; background: var(--b); color: #b5cbd8; font-weight: 300; outline: 1px solid var(--g); letter-spacing: .2px; }
.ctx hr { width: 100%; flex: none; border: 0; height: 1px; background: #ecf0ef; margin: 4px 0 3px; }
.mouse { position: absolute; left: 1023px; top: 592px; }

.tab { position: absolute; left: 0; top: 954px; width: 26px; height: 22px; background: var(--b); display: flex; align-items: center; justify-content: center; }
.dock { position: absolute; left: 740.500px; top: 1032px; display: flex; gap: 4.500px; }
.dock div { width: 45px; height: 46px; display: flex; flex-direction: column; align-items: center; padding-top: 9px; position: relative; }
.dock svg { width: 28px; height: 28px; }
.dock .run::after { content: ""; width: 7px; height: 3px; border-radius: 2px; background: #6fa6cc; margin-top: 4px; }
.dock .active { background-image: conic-gradient(from 90deg at 1px 1px, #0000 50%, #3589ca 0 75%, #0000 0), conic-gradient(from 90deg at 1px 1px, #0000 50%, #3589ca 0 75%, #0000 0); background-size: 4px 4px; background-position: 0 0, 2px 2px; }
.dock .active svg { width: 25px; height: 28px; }
.dock .run.active::after { width: 18px; background: var(--g); }
.tray { position: absolute; left: 1310.500px; top: 1028px; height: 52px; display: flex; }
.tray div { width: 27px; display: flex; align-items: center; justify-content: center; }
.tray svg { width: 19px; height: 19px; }
.tray .ghost { background-image: conic-gradient(from 90deg at 1px 1px, #0000 50%, #3589ca 0 75%, #0000 0), conic-gradient(from 90deg at 1px 1px, #0000 50%, #3589ca 0 75%, #0000 0); background-size: 4px 4px; background-position: 0 0, 2px 2px; }
.tray .ime { color: #c6cecc; font-size: 14px; }
.tray .when { width: 80px; margin-right: -1px; flex-direction: column; align-items: flex-end; color: #b8cfde; font-size: 13px; letter-spacing: -.05px; line-height: 17px; }
</style>
